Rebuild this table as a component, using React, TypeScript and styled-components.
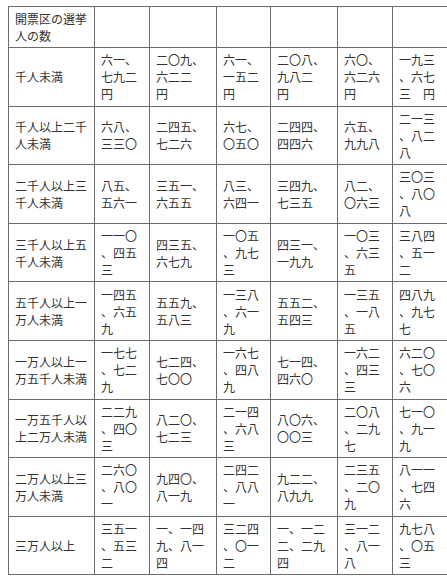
import React from "react";
import styled, { createGlobalStyle } from "styled-components";

const GlobalStyle = createGlobalStyle`
  html, body {
    margin: 0;
    padding: 0;
    background: #fff;
  }
`;

const Page = styled.div`
  padding: 6px 0 0 8px;
  font-family: "Noto Sans CJK JP", "Noto Sans", sans-serif;
  font-size: 12px;
  color: #333;
`;

const Table = styled.table`
  border-collapse: collapse;
  table-layout: fixed;
  width: 440px;
`;

const Cell = styled.td<{ $header?: boolean }>`
  border: 1px solid #6b6b6b;
  padding: 3px 5px 3px 6px;
  line-height: 17px;
  vertical-align: middle;
  white-space: nowrap;
  overflow: hidden;
  height: ${(p) => (p.$header ? "34px" : "51.6px")};
`;

const widths = [86, 55, 67, 54, 67, 55, 56];

const rows: [string, string[]][] = [
  [
    "千人未満",
    ["六一、/七九二/円", "二〇九、/六二二/円", "六一、/一五二/円", "二〇八、/九八二/円", "六〇、/六二六/円", "一九三/、六七/三　円"],
  ],
  [
    "千人以上二千/人未満",
    ["六八、/三三〇", "二四五、/七二六", "六七、/〇五〇", "二四四、/四四六", "六五、/九九八", "二一三/、八二/八"],
  ],
  [
    "二千人以上三/千人未満",
    ["八五、/五六一", "三五一、/六五五", "八三、/六四一", "三四九、/七三五", "八二、/〇六三", "三〇三/、八〇/八"],
  ],
  [
    "三千人以上五/千人未満",
    ["一一〇/、四五/三", "四三五、/六七九", "一〇五/、九七/三", "四三一、/一九九", "一〇三/、六三/五", "三八四/、五一/二"],
  ],
  [
    "五千人以上一/万人未満",
    ["一四五/、六五/九", "五五九、/五八三", "一三八/、六一/九", "五五二、/五四三", "一三五/、一八/五", "四八九/、九七/七"],
  ],
  [
    "一万人以上一/万五千人未満",
    ["一七七/、七二/九", "七二四、/七〇〇", "一六七/、四八/九", "七一四、/四六〇", "一六二/、四三/三", "六二〇/、七〇/六"],
  ],
  [
    "一万五千人以/上二万人未満",
    ["二二九/、四〇/三", "八二〇、/七二三", "二一四/、六八/三", "八〇六、/〇〇三", "二〇八/、二九/七", "七一〇/、九一/九"],
  ],
  [
    "二万人以上三/万人未満",
    ["二六〇/、八〇/一", "九四〇、/八一九", "二四二/、八八/一", "九二二、/八九九", "二三五/、二〇/九", "八一一/、七四/六"],
  ],
  [
    "三万人以上",
    ["三五一/、五三/二", "一、一四/九、八一/四", "三二四/、〇一/二", "一、一二/二、二九/四", "三一二/、八一/八", "九七八/、〇五/三"],
  ],
];

const Lines = ({ text }: { text: string }) => (
  <>
    {text.split("/").map((line, i) => (
      <React.Fragment key={i}>
        {i > 0 && <br />}
        {line}
      </React.Fragment>
    ))}
  </>
);

const App: React.FC = () => {
  return (
    <Page>
      <GlobalStyle />
      <Table>
        <colgroup>
          {widths.map((w, i) => (
            <col key={i} style={{ width: w }} />
          ))}
        </colgroup>
        <tbody>
          <tr>
            <Cell $header>
              <Lines text="開票区の選挙/人の数" />
            </Cell>
            {widths.slice(1).map((_, i) => (
              <Cell $header key={i} />
            ))}
          </tr>
          {rows.map(([label, values]) => (
            <tr key={label}>
              <Cell>
                <Lines text={label} />
              </Cell>
              {values.map((v, i) => (
                <Cell key={i}>
                  <Lines text={v} />
                </Cell>
              ))}
            </tr>
          ))}
        </tbody>
      </Table>
    </Page>
  );
};

export default App;
